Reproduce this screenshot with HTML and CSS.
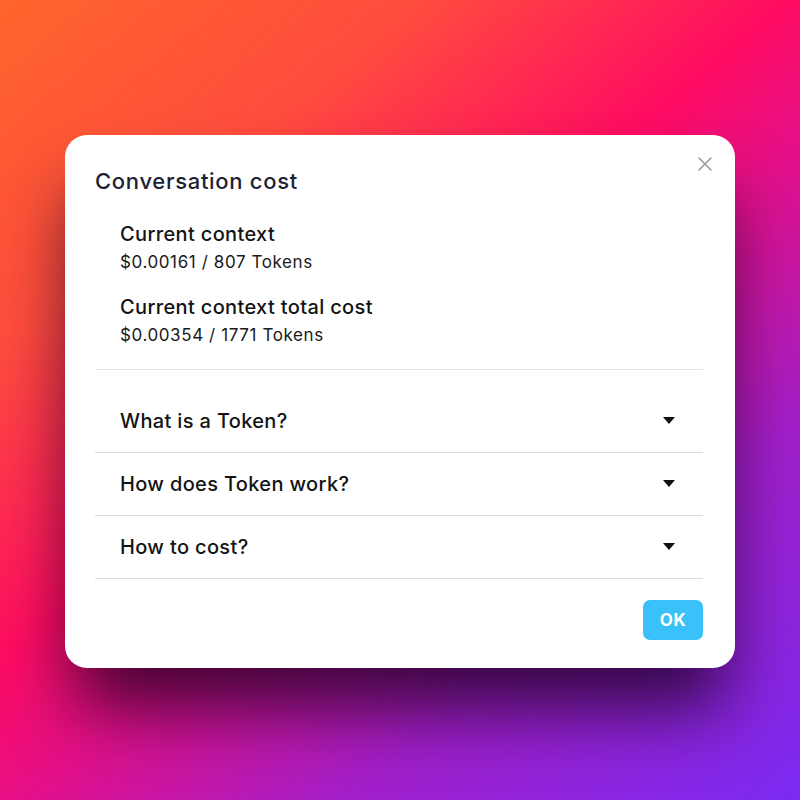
FILE: index.html
```html
<!DOCTYPE html>
<html lang="en">
<head>
<meta charset="utf-8">
<title>Conversation cost</title>
<link rel="stylesheet" href="styles.css">
</head>
<body>
<div class="stage">
  <div class="dialog">
    <button class="close" aria-label="Close">
      <svg width="16" height="16" viewBox="0 0 16 16"><path d="M2 2L14 14M14 2L2 14" stroke="#9a9a9a" stroke-width="1.6" stroke-linecap="round" fill="none"/></svg>
    </button>
    <h1 class="title">Conversation cost</h1>
    <div class="stats">
      <div class="stat">
        <div class="stat-label">Current context</div>
        <div class="stat-value">$0.00161 / 807 Tokens</div>
      </div>
      <div class="stat">
        <div class="stat-label">Current context total cost</div>
        <div class="stat-value">$0.00354 / 1771 Tokens</div>
      </div>
    </div>
    <div class="accordion">
      <div class="row"><span>What is a Token?</span><span class="caret"></span></div>
      <div class="row"><span>How does Token work?</span><span class="caret"></span></div>
      <div class="row"><span>How to cost?</span><span class="caret"></span></div>
    </div>
    <div class="footer">
      <button class="ok">OK</button>
    </div>
  </div>
</div>
</body>
</html>
```

FILE: styles.css
```css
* { box-sizing: border-box; }
html, body { margin: 0; padding: 0; }
body {
  width: 800px;
  height: 800px;
  font-family: Inter, "Noto Sans", "Liberation Sans", sans-serif;
  background: linear-gradient(140deg, #ff652c 0%, #ff4c3e 24%, #ff0c62 45%, #e3108a 56%, #a21fca 74%, #7a2af2 100%);
  overflow: hidden;
}
.stage {
  width: 800px;
  height: 800px;
  padding-top: 2px;
  display: flex;
  align-items: center;
  justify-content: center;
}
.dialog {
  position: relative;
  width: 670px;
  background: #fff;
  border-radius: 22px;
  padding: 28px 32px 28px 30px;
  box-shadow: 0 50px 70px -10px rgba(25, 0, 30, 0.8);
}
.close {
  position: absolute;
  top: 21px;
  right: 22px;
  width: 16px;
  height: 16px;
  padding: 0;
  border: 0;
  background: none;
  display: flex;
}
.title {
  margin: 0;
  font-size: 22px;
  line-height: 36px;
  font-weight: 500;
  color: #1c2233;
  letter-spacing: 0.7px;
}
.stats {
  margin-top: 21px;
  padding: 0 0 20px 25px;
  border-bottom: 1px solid #e4e4e4;
  display: flex;
  flex-direction: column;
  gap: 17px;
}
.stat-label {
  font-size: 20px;
  line-height: 28px;
  font-weight: 500;
  color: #141414;
  letter-spacing: 0.35px;
}
.stat-value {
  font-size: 17px;
  line-height: 28px;
  color: #1a1a1a;
  letter-spacing: 0.6px;
}
.accordion {
  margin-top: 20px;
}
.row {
  height: 63px;
  border-bottom: 1px solid #dcdcdc;
  display: flex;
  align-items: center;
  justify-content: space-between;
  padding: 0 28px 0 25px;
  font-size: 20px;
  font-weight: 500;
  color: #141414;
  letter-spacing: 0.35px;
}
.caret {
  width: 0;
  height: 0;
  border-left: 6px solid transparent;
  border-right: 6px solid transparent;
  border-top: 7px solid #111;
}
.footer {
  margin-top: 21px;
  display: flex;
  justify-content: flex-end;
}
.ok {
  width: 60px;
  height: 40px;
  border: 0;
  border-radius: 7px;
  background: #3bc1fa;
  color: #fff;
  font-family: Inter, "Noto Sans", sans-serif;
  font-size: 17px;
  font-weight: 700;
  letter-spacing: 0.5px;
}
```
